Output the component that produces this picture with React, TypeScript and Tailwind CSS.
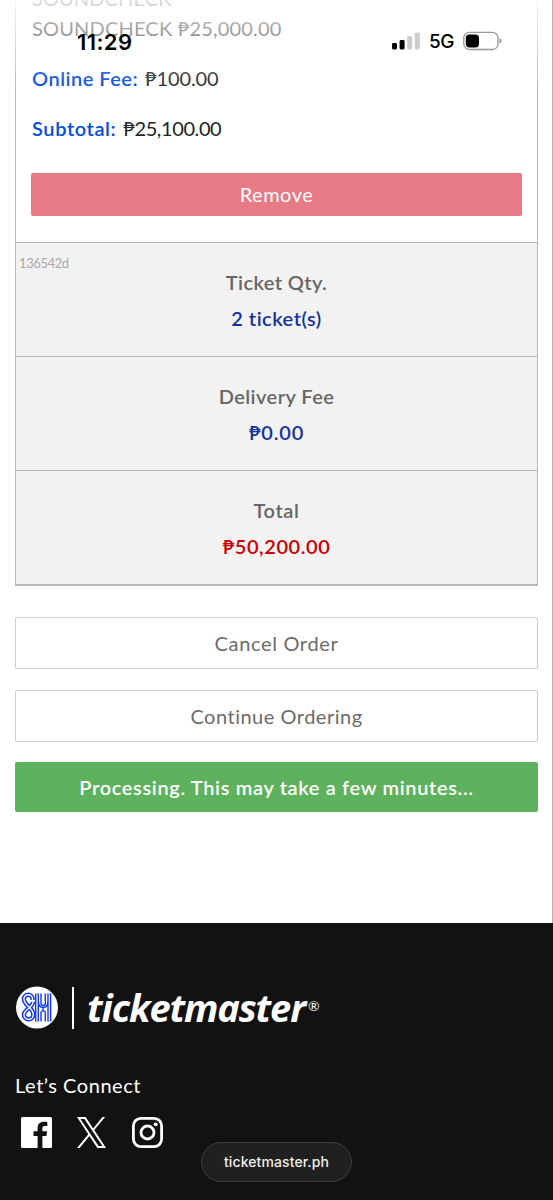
import React from "react";

function SignalIcon() {
  return (
    <svg width="28" height="18" viewBox="0 0 28 18">
      <rect x="0" y="11" width="5" height="6.5" rx="1.4" fill="#000" />
      <rect x="7.6" y="8" width="5" height="9.5" rx="1.4" fill="#000" />
      <rect x="15.2" y="4.3" width="5" height="13.2" rx="1.4" fill="#cdcdcd" />
      <rect x="22.8" y="0.5" width="5" height="17" rx="1.4" fill="#cdcdcd" />
    </svg>
  );
}

function BatteryIcon() {
  return (
    <svg width="40" height="20" viewBox="0 0 40 20">
      <rect x="0.8" y="1.3" width="34.2" height="17.2" rx="5.6" fill="none" stroke="#999" strokeWidth="1.3" />
      <rect x="2.8" y="3.4" width="13.2" height="13" rx="3.6" fill="#000" />
      <path d="M36.5 7.2c1.4.5 2 1.5 2 2.7s-.6 2.2-2 2.7z" fill="#999" />
    </svg>
  );
}

function SmLogo() {
  const curve = "M17.5 14v-1a4.3 4.3 0 0 0-8.600 0c0 6.600 9.400 8.400 9.400 15.600a4.700 4.700 0 0 1-9.400 0c0-5.400 9.100-6.600 9.100-12.800";
  const stems = "M22 7.400v28M34.300 7.400v28";
  return (
    <svg width="43" height="43" viewBox="0 0 43 43">
      <circle cx="22" cy="21.5" r="21" fill="#fff" />
      <g fill="none" stroke="#1238f0">
        <path d={curve} strokeWidth="4.400" />
        <path d={stems} strokeWidth="4" />
        <path d="M26 7.400v10a2.150 2.150 0 0 0 4.300 0v-10" strokeWidth="1.400" />
        <path d="M23.500 16c0 3.400 1.700 5.500 4.650 5.500s4.650-2.100 4.650-5.500M28.150 21.500v3.500" strokeWidth="1.400" />
        <path d="M26 35.400v-8.400a2.150 2.150 0 0 1 4.300 0v8.400" strokeWidth="1.400" />
      </g>
      <g fill="none" stroke="#fff">
        <path d={curve} strokeWidth="1.400" />
        <path d={stems} strokeWidth="1.200" />
      </g>
    </svg>
  );
}

function FacebookIcon() {
  return (
    <svg width="31" height="31" viewBox="0 0 31 31">
      <path fill="#fff" d="M1.500 0h28A1.500 1.500 0 0 1 31 1.500v28a1.500 1.500 0 0 1-1.500 1.500h-8.100V19h4l.7-4.700h-4.700v-3c0-1.400.5-2.300 2.400-2.300h2.500V4.900c-.5-.1-1.900-.2-3.600-.2-3.600 0-6.100 2.200-6.100 6.200v3.400h-4.100V19h4.100v12H1.500A1.500 1.500 0 0 1 0 29.500v-28A1.500 1.500 0 0 1 1.500 0z" />
    </svg>
  );
}

function XIcon() {
  return (
    <svg width="29" height="31" viewBox="0 0 1200 1227" preserveAspectRatio="none">
      <path fill="#fff" d="M714.163 519.284L1160.890 0H1055.030L667.137 450.887L357.328 0H0L468.492 681.821L0 1226.370H105.866L515.491 750.218L842.672 1226.370H1200L714.137 519.284H714.163ZM569.165 687.828L521.697 619.934L144.011 79.694H306.615L611.412 515.685L658.880 583.579L1055.080 1150.300H892.476L569.165 687.854V687.828Z" />
    </svg>
  );
}

function InstagramIcon() {
  return (
    <svg width="31" height="31" viewBox="0 0 31 31" fill="none" stroke="#fff">
      <rect x="1.400" y="1.400" width="28.200" height="28.200" rx="7.500" strokeWidth="2.800" />
      <circle cx="15.500" cy="15.500" r="6.500" strokeWidth="2.800" />
      <circle cx="23.700" cy="7.300" r="1.900" fill="#fff" stroke="none" />
    </svg>
  );
}

function SummaryRow({ label, children }: { label: React.ReactNode; children: React.ReactNode }) {
  return (
    <div className="relative flex h-[114px] flex-col items-center border-t border-[#b8b8b8] bg-[#f2f2f2] pt-[21px] text-[20px] leading-[36px] font-semibold text-[#666]">
      {label}
      {children}
    </div>
  );
}

export default function App() {
  return (
    <div className="relative flex h-[1200px] w-[553px] flex-col overflow-hidden bg-[#121212] font-['Lato','Noto_Sans',sans-serif]">
      <main className="h-[923px] shrink-0 border-r border-[#b5b5b5] bg-white px-[15px]">
        <section className="w-[523px] border-x border-b-2 border-[#b8b8b8]">
          <div className="flex h-[242px] flex-col overflow-hidden px-[15px] text-[20px] whitespace-nowrap text-[#212529]">
            <div className="-mt-[17px] h-[30px] shrink-0 pl-px leading-[30px]">
              <span className="tracking-[0.1px]">SOUNDCHECK</span>
            </div>
            <div className="h-[30px] shrink-0 pl-px leading-[30px]">
              <span className="tracking-[0.18px]">SOUNDCHECK ₱25,000.00</span>
            </div>
            <div className="mt-[20px] flex h-[30px] shrink-0 gap-[7px] pl-px leading-[30px]">
              <span className="font-semibold tracking-[0.5px] text-[#024ddf]">Online Fee:</span>
              <span className="tracking-[-0.1px]">₱100.00</span>
            </div>
            <div className="mt-[20px] flex h-[30px] shrink-0 gap-[7px] pl-px leading-[30px]">
              <span className="font-semibold tracking-[0.6px] text-[#024ddf]">Subtotal:</span>
              <span className="tracking-[-0.4px]">₱25,100.00</span>
            </div>
            <button className="mt-[30px] h-[43px] shrink-0 rounded-[2px] bg-[#e67a85] pb-px text-[20px] tracking-[0.5px] text-white">
              Remove
            </button>
          </div>
          <SummaryRow
            label={
              <>
                <span className="absolute top-[11px] left-[3px] text-[13px] leading-[18px] font-normal tracking-[-0.4px] text-[#aaa]">136542d</span>
                <span className="tracking-[0.4px]">Ticket Qty.</span>
              </>
            }
          >
            <span className="tracking-[0.5px] text-[#15329b]">2 ticket(s)</span>
          </SummaryRow>
          <SummaryRow label={<span className="tracking-[0.45px]">Delivery Fee</span>}>
            <span className="tracking-[0.8px] text-[#15329b]">₱0.00</span>
          </SummaryRow>
          <SummaryRow label={<span className="tracking-[0.6px]">Total</span>}>
            <span className="tracking-[0.55px] text-[#cc0000]">₱50,200.00</span>
          </SummaryRow>
        </section>
        <div className="mt-[31px] flex w-[523px] flex-col text-[20px]">
          <button className="h-[52px] rounded-[2px] border border-[#ccc] text-[#6b6b6b]">
            <span className="tracking-[0.65px]">Cancel Order</span>
          </button>
          <button className="mt-[21px] h-[52px] rounded-[2px] border border-[#ccc] text-[#6b6b6b]">
            <span className="tracking-[0.5px]">Continue Ordering</span>
          </button>
          <button className="mt-[20px] h-[50px] rounded-[2px] bg-[#5eb25e] font-semibold text-white">
            <span className="tracking-[0.65px]">Processing. This may take a few minutes...</span>
          </button>
        </div>
      </main>
      <footer className="flex flex-col px-[15px] pt-[63px] text-white">
        <div className="flex h-[43px] items-center">
          <SmLogo />
          <div className="ml-[14px] h-[42px] w-[2px] bg-white" />
          <span className="ml-[13px] font-['Open_Sans'] text-[38px] leading-[43px] font-bold tracking-[-1.1px] italic">ticketmaster</span>
          <span className="ml-[3px] pb-1 text-[14px]">®</span>
        </div>
        <div className="mt-[41px] h-[30px] text-[20px] leading-[30px]">
          <span className="tracking-[0.55px]">Let’s Connect</span>
        </div>
        <div className="mt-[17px] ml-[6px] flex items-center">
          <FacebookIcon />
          <div className="ml-[25px]"><XIcon /></div>
          <div className="ml-[26px]"><InstagramIcon /></div>
        </div>
      </footer>
      <div className="absolute top-0 left-0 h-[90px] w-[552px] bg-linear-to-b from-white/85 to-white/0" />
      <div className="absolute top-[30px] left-[77px] font-['Inter'] text-[22px] leading-[24px] font-semibold tracking-[0.4px] text-black">11:29</div>
      <div className="absolute top-[30px] left-[392px] flex items-center">
        <SignalIcon />
        <span className="ml-[9px] w-[34px] pt-[2px] font-['Inter'] text-[19px] leading-[20px] font-medium tracking-[-0.5px] text-black">5G</span>
        <BatteryIcon />
      </div>
      <div className="absolute top-[1142px] left-[201px] flex h-[40px] w-[151px] items-center justify-center rounded-full border border-[#3c3c3c] bg-[#202020] pb-px font-['Inter'] text-[14px] font-medium tracking-[0.1px] text-[#eee]">
        ticketmaster.ph
      </div>
    </div>
  );
}
